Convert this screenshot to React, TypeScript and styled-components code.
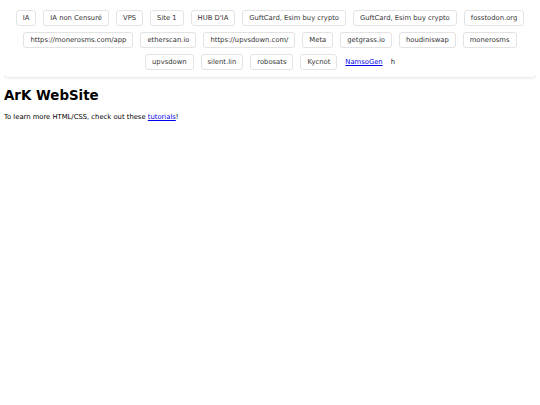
import React from "react";
import styled, { createGlobalStyle } from "styled-components";

const GlobalStyle = createGlobalStyle`
  body {
    margin: 0 4px;
    font-family: "DejaVu Sans", Verdana, sans-serif;
    font-size: 6.8px;
    background: #ffffff;
    color: #000000;
  }
  a {
    color: #0000ee;
  }
`;

const links: string[] = [
  "IA",
  "IA non Censuré",
  "VPS",
  "Site 1",
  "HUB D'IA",
  "GuftCard, Esim buy crypto",
  "GuftCard, Esim buy crypto",
  "fosstodon.org",
  "https://monerosms.com/app",
  "etherscan.io",
  "https://upvsdown.com/",
  "Meta",
  "getgrass.io",
  "houdiniswap",
  "monerosms",
  "upvsdown",
  "silent.lin",
  "robosats",
  "Kycnot",
];

const App: React.FC = () => {
  return (
    <>
      <GlobalStyle />
      <Nav>
        {links.map((label, i) => (
          <NavButton key={i}>{label}</NavButton>
        ))}
        <PlainLink href="#">NamsoGen</PlainLink>
        <Stray>h</Stray>
      </Nav>
      <Title>ArK WebSite</Title>
      <Intro>
        To learn more HTML/CSS, check out these <a href="#">tutorials</a>!
      </Intro>
    </>
  );
};

const Nav = styled.nav`
  display: flex;
  flex-wrap: wrap;
  justify-content: center;
  align-items: center;
  gap: 6px 7px;
  padding: 10px 8px 7px;
  background: #ffffff;
  border-radius: 0 0 4px 4px;
  box-shadow: 0 1px 3px rgba(0, 0, 0, 0.12);
`;

const NavButton = styled.button`
  height: 16px;
  padding: 0 6px;
  font-family: "DejaVu Sans", Verdana, sans-serif;
  font-size: 6.8px;
  color: #333333;
  background: #ffffff;
  border: 1px solid #e3e3e3;
  border-radius: 3px;
  cursor: pointer;
`;

const PlainLink = styled.a`
  margin-left: 1px;
`;

const Stray = styled.span`
  margin-left: 1px;
  color: #222222;
`;

const Title = styled.h1`
  font-size: 13.4px;
  margin: 11px 0 10px;
`;

const Intro = styled.p`
  margin: 0;
`;

export default App;
